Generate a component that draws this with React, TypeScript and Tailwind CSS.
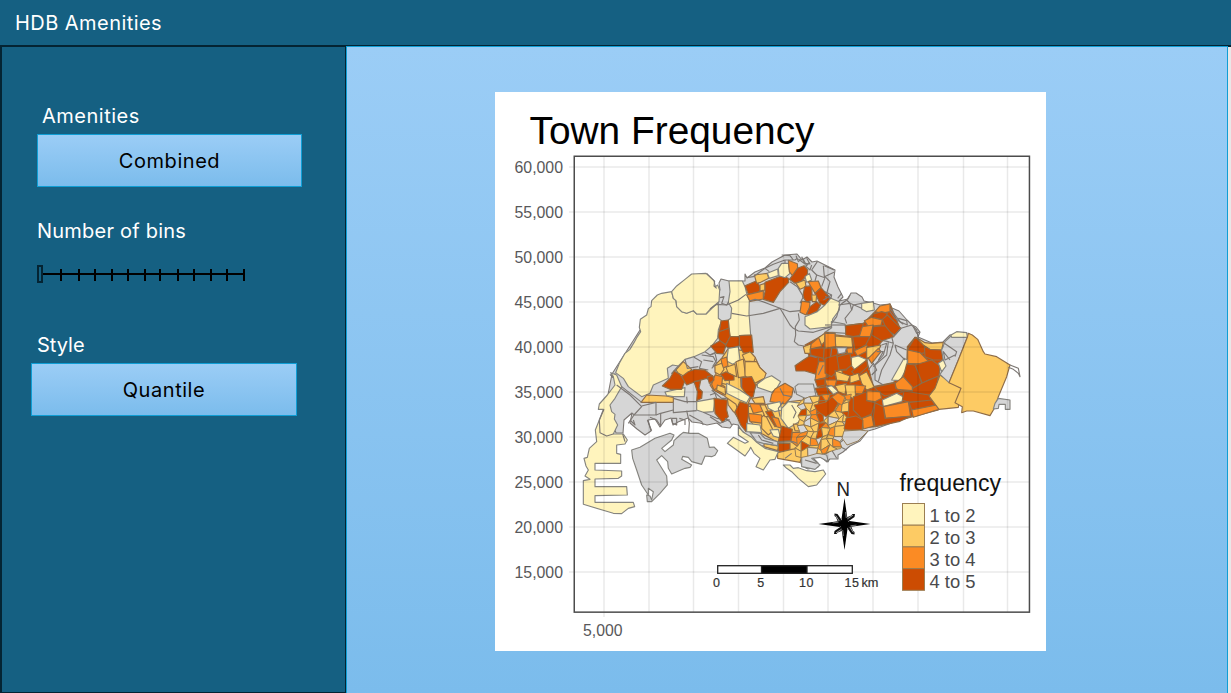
import React from "react";

type Tone = "c" | "y" | "o" | "d" | "g";

const FILL: Record<Tone, string> = {
  c: "#fff4bd",
  y: "#fdcb64",
  o: "#fb8b24",
  d: "#cc4c02",
  g: "#d6d6d6",
};

type Zone = [Tone, string];

// Each map sheet is digitised at three times the display scale.
interface Sheet {
  x: number;
  y: number;
  zones: Zone[];
  lines: string[];
}

const MAINLAND =
  "612,374 640,330 720,290 719,283 721,279 729,281 745,281 745,274 747,278 755,272 765,268 772,262 785,255 797,254 802,260 807,257 812,262 817,261 835,270 834,277 838,287 843,297 839,301 848,299 851,293 856,293 862,297 864,301 873,303 880,305 890,304 892,308 899,311 907,320 912,325 916,327 920,332 918,337 932,343 943,342 950,335 967,333 960,360 945,385 938,408 908,417 875,429 868,431 860,441 850,446 843,452 838,455 838,459 830,459 827,462 820,456 809,454 818,463 818,467 808,469 802,466 800,460 778,458 775,450 760,445 748,436 742,431 738,425 733,424 730,428 722,427 717,423 707,425 700,423 692,422 688,418 678,422 673,425 671,418 665,420 660,427 655,419 648,420 651,431 645,435 637,429 630,423 632,413 624,420 623,433 616,433 606,405";

const SHEETS: Sheet[] = [
  {
    x: 825,
    y: 280,
    zones: [
      ["d", "-60,195 0,162 80,170 62,137 115,130 150,95 195,72 225,145 170,185 125,240 145,320 205,308 245,260 247,200 270,172 300,190 350,240 340,290 312,348 340,390 150,440 50,450 -30,400 -15,320"],
    ],
    lines: [],
  },
  {
    x: 710,
    y: 335,
    zones: [["y", "15,90 35,70 55,40 120,50 136,68 150,98 168,115 140,148 115,205 108,285 75,235 52,190 22,165"]],
    lines: [],
  },
  {
    x: 710,
    y: 400,
    zones: [["y", "112,20 280,0 400,0 410,60 380,140 350,160 270,155 205,158 200,125 150,98 118,60"]],
    lines: [],
  },
  {
    x: 570,
    y: 240,
    zones: [
      ["c", "137,398 148,370 165,340 180,328 192,308 200,293 212,275 208,262 211,238 230,225 235,206 243,200 245,182 262,165 275,160 305,155 310,175 318,182 320,200 335,215 350,220 370,212 380,222 408,222 445,186 445,235 455,242 445,270 443,295 425,318 405,335 372,350 345,358 325,378 308,375 292,385 295,415 250,435 240,460 215,470 175,440 160,415"],
      ["c", "305,155 320,138 345,118 365,102 408,100 432,122 436,140 443,135 449,150 447,185 425,203 408,222 380,222 370,212 350,220 335,215 320,200 318,182 310,175"],
      ["y", "318,390 340,365 365,388 345,410 325,400"],
    ],
    lines: ["410,100 434,124 432,138 440,145", "345,358 352,385 385,380", "372,352 395,365 388,385 415,390", "395,345 430,350 440,370 425,385", "405,335 420,345 440,335", "400,360 430,365", "325,378 305,400 318,390", "120,403 128,412 136,400"],
  },
  {
    x: 570,
    y: 370,
    zones: [
      ["c", "122,8 140,15 155,50 135,85 120,105 125,125 135,133 133,147 143,165 130,192 160,192 172,210 165,222 140,225 140,250 152,253 152,280 75,280 75,300 155,303 155,318 145,325 75,327 75,350 170,350 172,375 75,377 75,397 190,397 194,410 175,415 155,431 130,430 40,403 40,332 60,328 45,318 55,300 48,288 42,265 52,262 58,235 80,215 76,180 88,150 100,118 85,118 88,102 112,75 135,45 130,20"],
      ["y", "213,97 230,75 288,78 310,82 310,97"],
      ["c", "285,66 345,53 343,80 310,80 290,77"],
      ["d", "277,48 300,25 312,3 328,12 345,32 335,58 300,58"],
      ["d", "335,20 355,5 375,-2 405,0 430,20 425,35 410,25 375,35 350,45"],
      ["d", "372,35 392,32 387,55 397,65 395,85 380,92 382,65"],
      ["c", "380,95 435,85 430,125 400,127 380,120"],
      ["o", "420,45 432,25 450,20 448,40 465,50 458,75 430,60"],
      ["y", "455,20 478,25 478,45 455,40"],
      ["g", "185,240 210,232 255,205 300,190 312,195 305,210 275,235 285,245 310,225 312,212 330,195 340,187 360,190 385,190 412,205 418,232 432,231 443,242 435,256 425,260 405,258 395,283 365,275 355,262 338,259 335,268 365,285 360,292 345,295 305,312 295,295 293,275 275,257 260,270 290,318 292,345 270,370 245,395 232,395 230,375 240,378 245,390 250,365 235,355 235,375 215,345 200,300 188,265"],
    ],
    lines: ["102,118 88,150 90,188 110,198 130,192", "140,45 180,75 215,110 192,135 175,160", "155,50 215,97", "215,108 258,97", "258,97 258,135 195,135 185,130", "310,97 310,128 380,122", "310,85 345,95 380,95", "350,80 352,100", "258,135 272,130 310,120", "272,130 272,168 260,150 240,142", "305,145 320,145 320,165 308,160 305,145", "350,122 358,158 356,190", "358,135 395,155 400,165", "400,127 440,145 480,150", "232,150 240,170 245,182", "328,145 345,150 345,165", "180,150 195,165 190,150", "158,192 165,215"],
  },
  {
    x: 710,
    y: 245,
    zones: [
      ["c", "57,108 97,108 105,125 110,145 118,165 117,205 122,270 90,272 85,300 60,300 58,270 55,225 62,220 65,190 55,172 60,140"],
      ["d", "105,122 140,107 150,125 150,140 115,148"],
      ["o", "110,150 160,138 160,162 120,169"],
      ["y", "133,90 172,85 176,100 152,112 140,115"],
      ["y", "150,120 165,115 165,135 150,138"],
      ["c", "172,85 203,72 205,92 178,100"],
      ["d", "165,112 215,92 235,100 236,112 210,140 190,172 160,163 165,140"],
      ["c", "205,70 215,55 235,55 240,85 225,98 207,92"],
      ["o", "235,46 262,56 264,82 247,92 238,80"],
      ["d", "262,70 282,62 293,75 292,90 275,108 255,115 238,103 247,92"],
      ["y", "258,115 285,105 288,125 270,133"],
      ["c", "285,95 298,85 305,105 290,112"],
      ["d", "284,125 305,122 307,165 290,172 278,155"],
      ["o", "295,110 325,108 333,128 315,145 303,125"],
      ["d", "333,128 362,160 345,182 330,175 315,145"],
      ["y", "305,150 320,150 318,170 307,170"],
      ["o", "275,168 300,172 298,190 288,210 270,202"],
      ["d", "300,185 320,170 332,180 322,198 298,210 290,207"],
      ["c", "285,215 322,200 345,180 362,160 388,170 388,195 368,222 365,245 300,252 285,240"],
      ["g", "364,230 405,237 408,265 368,262 345,262 365,248"],
      ["d", "33,228 55,225 57,250 28,260"],
      ["d", "27,260 57,250 61,275 48,298 30,290 25,275"],
      ["d", "2,303 30,287 48,300 40,327 20,325"],
      ["d", "60,275 85,275 90,275 92,300 62,312 46,303"],
      ["d", "88,272 125,270 130,322 100,324 88,300"],
      ["o", "303,297 330,275 335,305 300,312"],
      ["y", "326,278 345,264 350,282 335,300"],
      ["o", "345,262 375,265 375,307 343,308"],
      ["y", "375,270 395,272 408,305 375,307"],
      ["y", "280,305 303,297 300,325 285,325"],
    ],
    lines: ["0,192 20,178 50,180 85,165 108,148", "65,205 110,213 160,205 210,190 240,200 270,197", "118,168 135,163 150,167 210,190 240,240 250,250 265,258 310,262 365,245", "265,205 268,225 256,245 257,270 253,290 265,300 282,303", "110,98 130,95 165,70 178,80", "165,70 190,58 225,45 255,45 262,40", "215,30 240,32 250,45", "225,45 225,55", "258,32 265,50 278,40 290,62 298,52", "265,42 285,57 275,35", "305,60 300,75 285,62", "322,50 305,75 320,90 315,108", "320,90 345,98 335,125", "340,62 343,95 372,82", "345,95 360,110 350,145", "343,62 372,75", "30,158 42,155 35,175 50,180 55,172", "240,110 262,125 280,155 270,175", "290,40 300,57 285,55"],
  },
  {
    x: 710,
    y: 335,
    zones: [
      ["c", "55,40 85,35 90,75 68,88 50,78"],
      ["o", "33,72 50,66 54,92 38,100"],
      ["y", "15,92 35,85 42,103 30,120 15,112"],
      ["y", "48,97 75,88 80,125 55,115"],
      ["y", "78,80 100,72 107,125 85,128"],
      ["y", "97,60 120,50 136,68 132,80 105,78"],
      ["y", "105,80 140,80 150,98 168,115 163,130 130,147 105,122"],
      ["d", "32,118 48,110 72,122 72,135 45,137"],
      ["o", "15,120 38,125 35,150 12,165 5,148"],
      ["d", "92,128 125,125 137,150 130,185 118,190 93,155"],
      ["y", "22,150 45,158 47,180 20,165"],
      ["d", "-8,125 8,122 12,135 -2,145"],
      ["c", "50,145 90,165 120,185 110,203 90,195 50,175"],
      ["c", "142,147 165,130 185,122 212,140 200,160 185,172 142,157"],
      ["o", "195,162 225,145 250,160 245,185 225,207 180,200 185,178"],
      ["d", "12,190 52,195 50,225 55,245 38,262 15,235"],
      ["y", "52,190 78,208 87,238 70,230 55,210"],
      ["d", "75,230 90,200 115,208 115,240 108,290 92,270"],
      ["o", "118,205 155,208 162,228 130,235"],
      ["y", "125,190 160,185 165,205 135,205"],
      ["c", "172,208 210,200 215,225 195,230 175,220"],
      ["c", "215,220 235,200 278,205 290,230 265,262 235,280 213,250"],
      ["d", "255,92 280,75 300,62 325,65 325,105 320,118 285,108 258,108"],
      ["d", "300,42 343,38 340,70 325,66 303,60"],
      ["d", "343,38 385,40 380,65 360,80 340,75"],
      ["o", "327,80 352,80 348,128 315,135 320,105"],
      ["d", "350,80 378,68 372,108 352,128"],
      ["d", "378,70 412,50 410,105 372,108"],
      ["y", "370,108 395,105 405,138 380,135"],
      ["o", "345,135 380,135 375,155 350,152"],
      ["d", "315,135 345,130 345,150 322,155"],
      ["d", "315,160 350,155 355,178 325,182"],
      ["c", "350,155 365,152 385,170 370,178"],
      ["y", "375,152 410,145 405,178 385,170"],
      ["o", "328,185 370,180 375,203 330,203"],
      ["y", "280,190 322,185 325,207 287,212"],
      ["d", "310,208 365,205 360,225 345,240 315,225"],
      ["d", "370,200 400,180 408,205 375,225"],
      ["g", "255,155 265,147 310,147 318,182 285,190 260,178"],
    ],
    lines: ["0,60 15,55 20,75 8,95", "95,130 95,160", "210,160 220,180 245,185", "220,200 205,220 210,245", "245,210 258,232 250,250", "255,175 250,160", "300,62 320,68", "360,80 365,40", "340,90 325,120", "0,180 15,175 20,190", "5,165 35,190 50,190"],
  },
  {
    x: 710,
    y: 400,
    zones: [
      ["o", "115,40 155,45 160,70 120,65"],
      ["c", "110,70 150,75 155,98 110,95"],
      ["y", "155,52 165,42 190,92 175,105 155,85"],
      ["y", "150,15 165,15 182,50 165,50"],
      ["d", "167,35 185,32 205,75 195,80"],
      ["o", "185,50 205,55 215,85 200,80"],
      ["c", "180,90 205,88 212,115 190,108"],
      ["d", "215,78 247,88 243,122 205,125"],
      ["d", "205,130 240,130 240,150 218,160 205,152"],
      ["y", "250,72 290,75 288,95 255,92"],
      ["o", "247,97 275,97 290,128 270,145 243,125"],
      ["y", "203,158 245,148 265,145 277,163 270,187 203,175"],
      ["y", "162,130 205,138 203,152 162,140"],
      ["g", "120,98 150,100 165,115 203,125 203,137 160,130 140,125"],
      ["c", "85,80 100,97 125,112 140,127 165,145 205,155 195,178 180,180 160,210 138,200 150,175 132,160 122,142 118,150 105,168 52,130 70,112 105,130 115,125 85,105"],
      ["c", "220,195 240,195 250,205 265,203 290,212 315,215 340,210 347,222 320,255 295,260 265,235 245,215 230,205"],
      ["g", "275,160 310,155 350,165 355,185 330,172 305,175 330,195 315,208 275,200"],
    ],
    lines: ["145,105 155,120 190,130", "205,127 250,125 300,145 325,160", "225,175 245,160", "285,180 320,190", "0,50 30,70 55,60", "45,55 60,65 65,75", "365,150 380,175", "395,90 400,120 380,135", "425,90 430,110 450,115", "380,135 410,150"],
  },
  {
    x: 825,
    y: 280,
    zones: [
      ["c", "110,70 145,65 148,90 125,95 110,87"],
      ["o", "150,95 165,78 195,72 195,95 170,100"],
      ["d", "145,102 170,95 187,100 178,120 140,112"],
      ["o", "118,122 140,112 172,120 168,135 130,140"],
      ["d", "62,137 115,130 108,165 85,170 62,165"],
      ["o", "112,140 145,135 135,172 103,170"],
      ["d", "172,118 187,105 228,145 210,165 185,150"],
      ["d", "145,140 180,137 207,170 170,182 140,165"],
      ["y", "30,168 80,172 83,202 32,200"],
      ["o", "0,160 30,160 32,200 0,205"],
      ["d", "83,170 135,170 122,195 90,212"],
      ["o", "88,212 125,195 133,210 97,228"],
      ["o", "65,205 83,202 83,220 68,220"],
      ["g", "35,203 65,202 60,218 40,222"],
      ["y", "125,202 168,195 155,225 125,235"],
      ["c", "80,232 100,228 128,240 92,272 78,255"],
      ["d", "38,230 75,220 80,255 65,267 40,270 30,250"],
      ["d", "0,235 35,225 42,268 20,290 0,280"],
      ["o", "130,235 160,205 168,215 140,250"],
      ["d", "80,275 125,240 128,260 95,290"],
      ["y", "30,272 75,288 68,305 35,300"],
      ["y", "75,288 100,280 105,300 75,310"],
      ["y", "103,287 125,275 148,322 125,330 110,310"],
      ["o", "90,315 122,318 112,342 88,340"],
      ["y", "60,315 90,315 92,360 65,345"],
      ["d", "247,210 270,172 298,190 315,215 290,220"],
      ["y", "273,172 300,188 320,190 355,187 350,210 315,210 295,195"],
      ["o", "248,210 285,218 310,243 300,252 248,250"],
      ["d", "298,198 315,208 350,210 354,240 325,240 300,230"],
      ["c", "237,235 247,240 245,265 225,302 200,300"],
      ["d", "245,252 270,255 282,280 290,310 262,325 235,290"],
      ["d", "270,255 320,240 345,258 342,290 310,300 292,310"],
      ["d", "260,327 290,310 340,288 335,320 310,350 262,340"],
      ["o", "210,310 235,290 262,320 262,332 215,328"],
      ["d", "148,322 210,308 212,325 235,335 180,348 160,335"],
      ["c", "172,360 215,340 237,352 230,365 175,380"],
      ["d", "237,333 312,345 322,365 250,367 232,360"],
      ["o", "125,332 165,335 170,355 150,365 125,362"],
      ["d", "85,350 125,335 125,362 150,368 140,402 110,415 85,390"],
      ["o", "175,380 250,365 257,410 182,415"],
      ["d", "252,367 320,360 330,375 260,390"],
      ["o", "260,390 335,375 342,388 265,412"],
      ["d", "150,368 175,380 180,415 260,408 225,424 150,440 145,410"],
      ["d", "50,440 60,415 90,410 112,420 112,450 50,450"],
      ["o", "112,415 140,405 147,438 115,447"],
      ["y", "345,285 385,312 408,325 400,382 342,388 312,348 330,325"],
      ["g", "350,210 360,185 378,168 427,172 400,240 372,308 345,283 360,260 355,240"],
      ["c", "340,250 355,240 363,258 350,275"],
      ["c", "378,165 395,155 425,158 427,172 380,172"],
      ["y", "427,172 430,160 442,165 458,178 475,215 480,222 515,230 555,255 545,290 520,350 510,382 495,407 445,393 425,393 410,398 412,380 390,368 408,325 372,308 400,240"],
      ["g", "520,355 555,360 555,388 541,388 541,373 522,373 520,385 505,387 510,370"],
    ],
    lines: ["555,255 580,265 585,290 580,280 565,268 550,262", "40,75 75,70 80,90 60,115 65,130", "65,60 75,70 110,85", "20,130 35,110 45,75 65,60 75,45", "80,90 85,75 110,70", "0,135 62,135", "195,85 225,125 247,135 245,122 220,115", "195,95 210,115 235,133", "205,170 228,145 260,135 275,150 280,175", "175,182 190,185 205,190 200,170", "190,185 185,225 150,255 150,300 175,315", "170,195 185,190 175,225 145,260", "205,190 195,225 170,270 160,305", "240,240 215,215 210,195 245,210", "130,270 145,250 155,270 140,285", "155,215 175,215 160,240", "358,190 395,215 390,230", "375,240 355,215 360,240 390,225", "265,140 275,160 285,155", "20,45 -5,60", "50,40 38,55", "0,35 20,45 18,55 0,50"],
  },
];

// Cell tones of the central planning area, one character per subzone.
const CENTRAL = ["ygydodyo", "gyydodoy", "dyodyyoy", "ygodgyyd", "ygyoygyy", "gyydoyyg", "oyydyoyg", "oyogyygy", "ydyoyyog", "yygyoyyg"];

const jitter = (r: number, c: number, k: number) => {
  const v = Math.sin(r * 12.99 + c * 78.23 + k * 37.7) * 4375.5;
  return (v - Math.floor(v) - 0.5) * 6.2;
};
const node = (r: number, c: number) => {
  const x = 799 + c * 6.4 + jitter(r, c, 1) - (r > 7 ? 2 : 0);
  const y = 399 + r * 5.7 + jitter(r, c, 2) - c * 0.7;
  return `${x.toFixed(1)},${y.toFixed(1)}`;
};

const YTICKS = ["60,000", "55,000", "50,000", "45,000", "40,000", "35,000", "30,000", "25,000", "20,000", "15,000"];
const XGRID = [604, 649, 693.5, 738.5, 783.5, 828, 873, 918, 963.5, 1007.5];

const LEGEND: { tone: Tone; label: string }[] = [
  { tone: "c", label: "1 to 2" },
  { tone: "y", label: "2 to 3" },
  { tone: "o", label: "3 to 4" },
  { tone: "d", label: "4 to 5" },
];

function Compass() {
  const rays = [0, 90, 180, 270];
  return (
    <g transform="translate(844.5 524)">
      {rays.map((a) => (
        <g key={a} transform={`rotate(${a})`}>
          <path d="M0 0L8 -10L10.500 -10L10 -7Z M0 0L3 -7L10.500 -10Z" fill="#111" />
          <path d="M2.500 -5L8.500 -8.800" stroke="#ddd" strokeWidth=".7" />
          <path d="M0 -26L3 -5L0 0L-3 -5Z" fill="#000" />
          <path d="M1.100 -12L1.800 -6" stroke="#aaa" strokeWidth=".7" />
        </g>
      ))}
      <circle r="4.500" fill="#000" />
    </g>
  );
}

function TownMap() {
  return (
    <svg viewBox="495 92 551 559" className="block h-[559px] w-[551px]" fontFamily="Liberation Sans, Arial, sans-serif">
      <text x="529.5" y="144" fontSize="39" textLength="285" lengthAdjust="spacingAndGlyphs" fill="#000">
        Town Frequency
      </text>
      <g stroke="#7d7874" strokeWidth="1.1" strokeLinejoin="round">
        <polygon points={MAINLAND} fill={FILL.g} />
        {SHEETS.map((s, i) => (
          <g key={i} transform={`translate(${s.x} ${s.y}) scale(.33333)`} strokeWidth="3.4">
            {s.zones.map(([tone, pts], k) => (
              <polygon key={k} points={pts} fill={FILL[tone]} stroke={tone === "c" || tone === "g" ? "#85847f" : "#8f6d48"} />
            ))}
            {s.lines.map((pts, k) => (
              <polyline key={k} points={pts} fill="none" />
            ))}
          </g>
        ))}
        <g strokeWidth=".9" stroke="#8f7650">
          {CENTRAL.map((row, r) =>
            row.split("").map((t, c) =>
              r > 5 && c > 6 ? null : (
                <polygon
                  key={`${r}-${c}`}
                  points={`${node(r, c)} ${node(r, c + 1)} ${node(r + 1, c + 1)} ${node(r + 1, c)}`}
                  fill={FILL[t as Tone]}
                />
              )
            )
          )}
          <polygon points="814,405 826,402 832,397 838,403 834,411 826,417 817,411" fill={FILL.d} />
          <polygon points="832,397 838,393 845,397 842,405 838,403" fill={FILL.o} />
          <polygon points="844,429 846,418 856,416 863,420 862,430 848,430" fill={FILL.d} />
          <polygon points="844,431 860,430 868,431 858,441 847,445 842,438" fill={FILL.g} />
        </g>
      </g>
      <g stroke="#000" strokeOpacity=".085" strokeWidth="1.500">
        {XGRID.map((x, i) => (
          <line key={x} x1={x} x2={x} y1="156" y2={i === 0 ? 617 : 612} />
        ))}
        {YTICKS.map((t, i) => (
          <line key={t} x1="569" x2="1029" y1={167 + i * 45} y2={167 + i * 45} />
        ))}
      </g>
      <rect x="574.25" y="156.250" width="455.200" height="455.900" fill="none" stroke="#4c4c4c" strokeWidth="1.500" />
      <g fontSize="16" fill="#58585a">
        {YTICKS.map((t, i) => (
          <text key={t} x="514.5" y={173.200 + i * 45} textLength="48.500" lengthAdjust="spacingAndGlyphs">
            {t}
          </text>
        ))}
        <text x="583" y="636" textLength="39.500" lengthAdjust="spacingAndGlyphs">
          5,000
        </text>
      </g>
      <text x="836.5" y="495.500" fontSize="19.500" textLength="13.500" lengthAdjust="spacingAndGlyphs" fill="#222">
        N
      </text>
      <Compass />
      <g stroke="#222" strokeWidth="1.300">
        <rect x="717.700" y="565.700" width="134.600" height="7.600" fill="#fff" />
        <rect x="761.5" y="565.700" width="45.500" height="7.600" fill="#000" />
      </g>
      <g fontSize="12.500" fill="#333" stroke="#333" strokeWidth=".2">
        <text x="713" y="587.300">0</text>
        <text x="757.300" y="587.300">5</text>
        <text x="799" y="587.300" textLength="14.500">10</text>
        <text x="844.500" y="587.300" textLength="14.500">15</text>
        <text x="861.500" y="587.300" textLength="17" lengthAdjust="spacingAndGlyphs">km</text>
      </g>
      <text x="899.500" y="490.700" fontSize="23" textLength="101.500" lengthAdjust="spacingAndGlyphs" fill="#111">
        frequency
      </text>
      {LEGEND.map((l, i) => (
        <g key={l.tone}>
          <rect x="902.500" y={503.500 + i * 21.700} width="22" height="21.700" fill={FILL[l.tone]} stroke="#9b7e52" strokeWidth="1" />
          <text x="929.5" y={522.200 + i * 22} fontSize="19" textLength="46" lengthAdjust="spacingAndGlyphs" fill="#4a4a4c">
            {l.label}
          </text>
        </g>
      ))}
    </svg>
  );
}

const TICKS = [61, 79, 95, 112, 128, 145, 160, 178, 194, 211, 227, 244];

function BinSlider() {
  return (
    <svg viewBox="37 264 210 20" className="block h-5 w-[210px]" shapeRendering="crispEdges">
      <path d="M43 274H245" stroke="#000" strokeWidth="2" />
      {TICKS.map((x) => (
        <path key={x} d={`M${x} 269V281`} stroke="#000" strokeWidth="2" />
      ))}
      <rect x="38" y="266" width="4" height="16" fill="#156082" stroke="#042433" strokeWidth="2" />
    </svg>
  );
}

function Choice({ children }: { children: React.ReactNode }) {
  return (
    <button className="flex h-[53px] w-full items-center justify-center border border-[#0f9ed5] bg-linear-to-b from-[#9bcdf6] to-[#7bbcec] tracking-[0.55px] text-black">
      {children}
    </button>
  );
}

export default function App() {
  return (
    <div className="flex h-[693px] w-[1231px] flex-col overflow-hidden bg-[#156082] font-['Inter',sans-serif] text-[20px] leading-[26px] text-white">
      <header className="flex h-[46px] shrink-0 items-center border-b border-[#042433] pl-[15px]">
        <h1 className="tracking-[0.45px]">HDB Amenities</h1>
      </header>
      <div className="flex min-h-0 flex-1">
        <aside className="flex w-[346px] shrink-0 flex-col border-t border-r border-b border-l-2 border-[#042433]">
          <section className="mt-[56px] ml-[35px] w-[265px]">
            <h2 className="mb-[5px] pl-[5px] tracking-[0.5px]">Amenities</h2>
            <Choice>Combined</Choice>
          </section>
          <section className="mt-[31px] ml-[35px]">
            <h2 className="mb-5 tracking-[0.22px]">Number of bins</h2>
            <BinSlider />
          </section>
          <section className="mt-[48px] ml-[29px] w-[266px]">
            <h2 className="mb-[5px] pl-[6px]">Style</h2>
            <Choice>Quantile</Choice>
          </section>
        </aside>
        <main className="flex w-[882px] shrink-0 items-start border-t border-r border-l border-[#0f9ed5] bg-linear-to-b from-[#9bcdf6] to-[#7bbcec] pt-[45px] pl-[148px]">
          <div className="bg-white">
            <TownMap />
          </div>
        </main>
        <div className="flex-1 border-t border-[#042433] bg-[#e8e8e8]" />
      </div>
    </div>
  );
}
